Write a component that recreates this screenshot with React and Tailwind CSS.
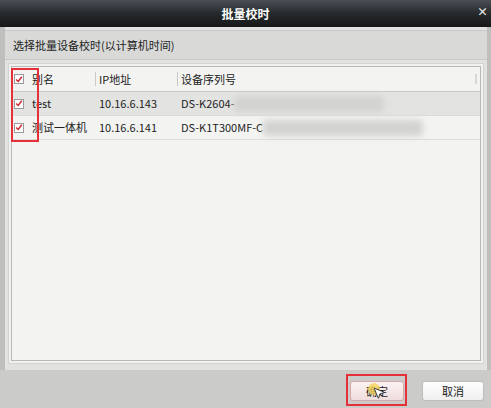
import { MousePointer2 } from 'lucide-react'

const FONT = { fontFamily: '"Noto Sans CJK SC", "Liberation Sans", sans-serif' }

const rows = [
  { name: 'test', ip: '10.16.6.143', serial: 'DS-K2604-', blurW: 'w-[150px]' },
  { name: '测试一体机', ip: '10.16.6.141', serial: 'DS-K1T300MF-C', blurW: 'w-[160px]' },
]

const Check = () => (
  <span className="flex h-[10px] w-[10px] items-center justify-center border border-[#9a9a9a] bg-white">
    <svg viewBox="0 0 10 10" className="h-[9px] w-[9px]">
      <path d="M1.5 5 L4 7.5 L8.5 1.5" fill="none" stroke="#d0262c" strokeWidth="1.8" />
    </svg>
  </span>
)

export default function App() {
  return (
    <div className="relative h-[408px] w-[491px] overflow-hidden bg-[#cbccc9] text-[11px] text-[#222]" style={FONT}>
      {/* title bar */}
      <div className="relative flex h-[27px] items-center justify-center bg-gradient-to-b from-[#4a4f55] via-[#262a2c] to-[#161818]">
        <span className="text-[12px] font-bold text-white">批量校时</span>
        <span className="absolute right-[3px] top-[6px] text-[11px] font-bold leading-none text-[#e8e8e8]">×</span>
      </div>

      <div className="flex h-[343px] flex-col border-l-[5px] border-r-[4px] border-[#bfc0bd] bg-[#e2e3e1]">
        <div className="mt-[3px] flex h-[30px] items-center border-y border-[#c8c9c7] bg-[#d9dad8] pl-[8px] text-[11px]">
          选择批量设备校时(以计算机时间)
        </div>

        {/* device table */}
        <div className="mx-[3px] mt-[3px] mb-[6px] flex-1 border border-[#d4d5d3] bg-[#f1f2f0] p-[2px]">
          <div className="h-full border border-[#b9bab8] bg-[#f3f4f2]">
            <div className="flex h-[25px] items-center border-b border-[#c9cac8]">
              <div className="flex w-[83px] items-center pl-[2px]">
                <Check />
                <span className="ml-[8px]">别名</span>
              </div>
              <div className="h-[14px] border-l border-[#c9cac8]" />
              <div className="w-[81px] pl-[3px]">IP地址</div>
              <div className="h-[14px] border-l border-[#c9cac8]" />
              <div className="pl-[3px]">设备序列号</div>
              <div className="ml-auto mr-[3px] h-[10px] w-[2px] bg-[#d8d8d8]" />
            </div>
            {rows.map((r, i) => (
              <div
                key={r.ip}
                className={`flex h-[24px] items-center border-b border-[#dcdcdc] ${i === 0 ? 'bg-[#e3e4e2]' : ''}`}
              >
                <div className="flex w-[84px] items-center pl-[2px]">
                  <Check />
                  <span className="ml-[8px]">{r.name}</span>
                </div>
                <div className="w-[82px] pl-[3px]">{r.ip}</div>
                <div className="pl-[3px]">{r.serial}</div>
                <div className={`h-[16px] ${r.blurW} rounded-sm bg-[#d2d3d1] blur-[3px]`} />
              </div>
            ))}
          </div>
        </div>
      </div>

      {/* footer buttons */}
      <div className="flex h-[38px] items-center justify-end gap-[18px] pr-[7px] pt-[4px]">
        <button className="h-[20px] w-[54px] rounded-[3px] border border-[#d2a8ab] bg-gradient-to-b from-[#fbf3f3] to-[#f0dcdd] text-[11px]">
          确定
        </button>
        <button className="h-[20px] w-[62px] rounded-[3px] border border-[#bdbdbd] bg-gradient-to-b from-white to-[#efefef] text-[11px]">
          取消
        </button>
      </div>

      {/* highlight marks */}
      <div className="absolute left-[11px] top-[68px] h-[74px] w-[28px] border-2 border-[#e5303a]" />
      <div className="absolute left-[346px] top-[374px] h-[32px] w-[61px] border-2 border-[#e5303a]" />
      <div className="absolute left-[368px] top-[383px] h-[12px] w-[12px] rounded-full bg-[#f2d35a] opacity-80" />
      <MousePointer2 className="absolute left-[372px] top-[386px]" size={14} fill="white" color="#222" strokeWidth={1.5} />
    </div>
  )
}
